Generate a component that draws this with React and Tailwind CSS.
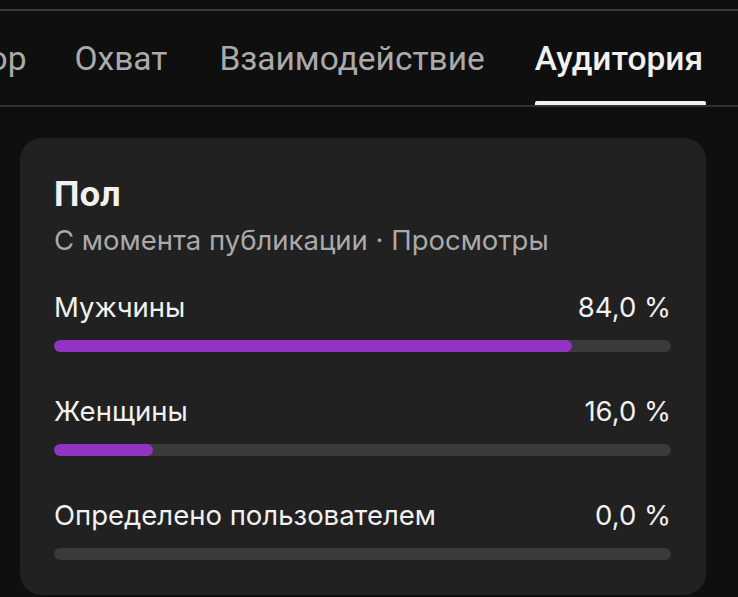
export default function App() {
  const rows = [
    { label: "Мужчины", value: "84,0 %", pct: 84 },
    { label: "Женщины", value: "16,0 %", pct: 16 },
    { label: "Определено пользователем", value: "0,0 %", pct: 0 },
  ];
  return (
    <div
      className="w-[738px] h-[597px] overflow-hidden bg-[#0f0f0f] text-white"
      style={{ fontFamily: "Roboto, 'Noto Sans', sans-serif" }}
    >
      <div className="h-[9px]" />
      <div className="h-[2px] bg-[#3a3a3a]" />
      <div className="h-[94px] flex items-stretch ml-[-70px] whitespace-nowrap pt-[2px]">
        <div className="flex items-center text-[33.5px] text-[#aaaaaa]">Обзор</div>
        <div className="ml-[48px] flex items-center text-[33.5px] text-[#aaaaaa]">Охват</div>
        <div className="ml-[52px] flex items-center text-[33.5px] text-[#aaaaaa]">Взаимодействие</div>
        <div className="ml-[50px] relative flex items-center text-[33.5px] font-medium text-[#f1f1f1]">
          Аудитория
          <div className="absolute left-0 right-[-3px] bottom-0 h-[4px] rounded-t-[2px] bg-[#f1f1f1]" />
        </div>
      </div>
      <div className="h-[2px] bg-[#303030]" />
      <div
        className="ml-[20px] w-[686px] mt-[31px] rounded-[22px] bg-[#212121] pl-[34px] pr-[35px] pt-[36px] pb-[35px]"
        style={{ fontFamily: "Inter, Roboto, sans-serif" }}
      >
        <div className="text-[34px] font-bold leading-[40px] text-[#f1f1f1]">Пол</div>
        <div className="text-[27.5px] leading-[32px] text-[#aaaaaa] mt-[10px]">С момента публикации · Просмотры</div>
        <div className="mt-[35px] flex flex-col gap-[43px]">
          {rows.map((r) => (
            <div key={r.label}>
              <div className="flex justify-between text-[27.5px] leading-[32px] text-[#f1f1f1]">
                <span>{r.label}</span>
                <span>{r.value}</span>
              </div>
              <div className="mt-[17px] h-[12px] rounded-full bg-[#3a3a3a] overflow-hidden">
                <div className="h-full rounded-full bg-[#9333c4]" style={{ width: `${r.pct}%` }} />
              </div>
            </div>
          ))}
        </div>
      </div>
    </div>
  );
}
